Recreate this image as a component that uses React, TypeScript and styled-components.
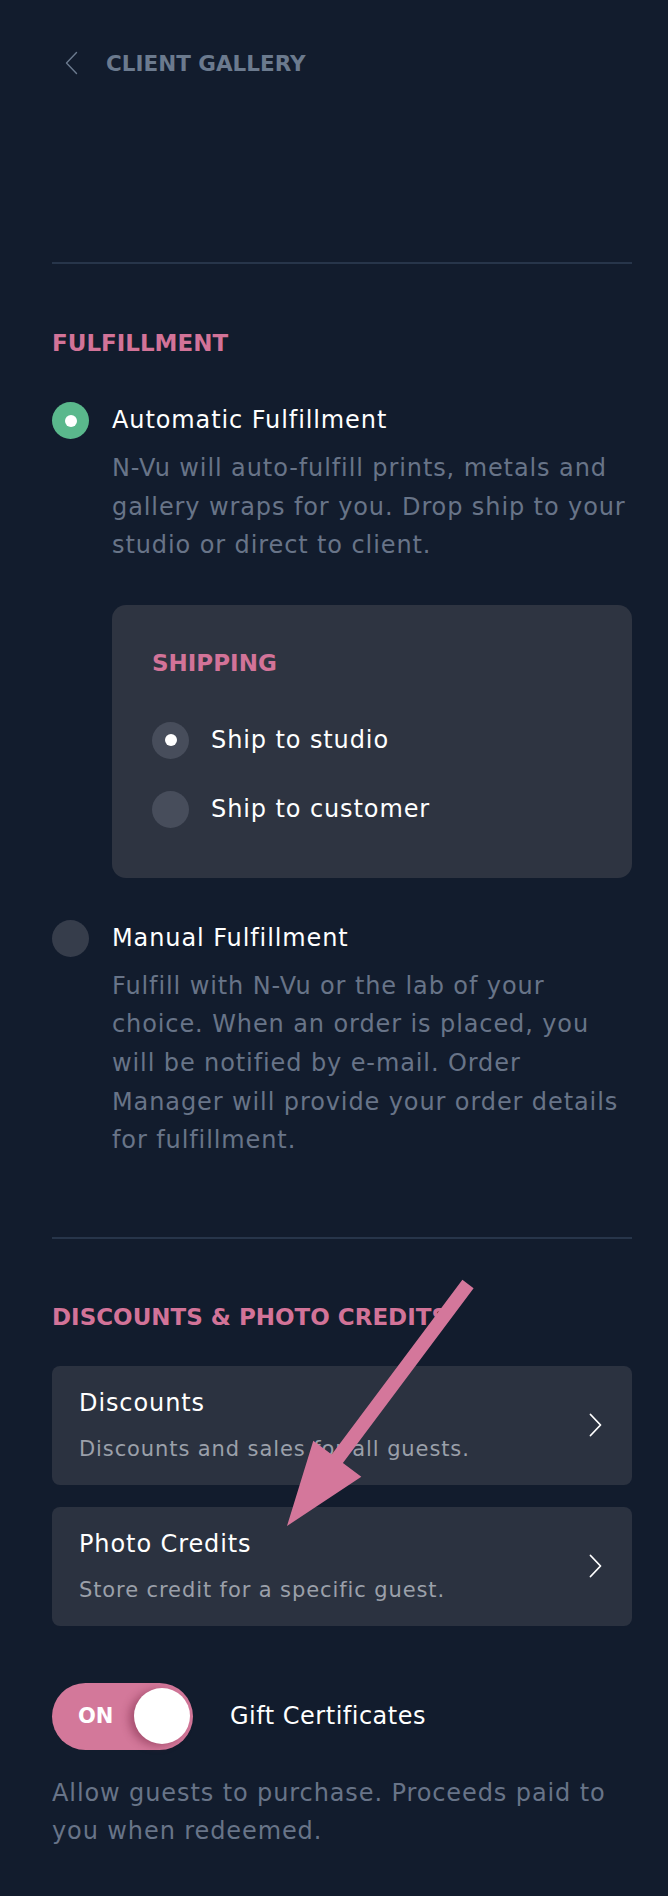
import React from 'react';
import styled, { createGlobalStyle } from 'styled-components';

const GlobalStyle = createGlobalStyle`
  html, body {
    margin: 0;
    padding: 0;
    background: #121c2d;
  }
  body {
    font-family: "DejaVu Sans", "Noto Sans", sans-serif;
    -webkit-font-smoothing: antialiased;
  }
  * {
    box-sizing: border-box;
  }
`;

const Page = styled.div`
  position: relative;
  width: 668px;
  min-height: 1896px;
  padding: 0 36px 0 52px;
  background: #121c2d;
  overflow: hidden;
`;

const TopBar = styled.div`
  display: flex;
  align-items: center;
  gap: 28px;
  height: 126px;
  padding-left: 13px;
`;

const BackTitle = styled.span`
  font-size: 21.5px;
  font-weight: 700;
  color: #6b7a8e;
`;

const Divider = styled.hr<{ $top: number }>`
  margin: ${(p) => p.$top}px 0 0;
  border: none;
  height: 2px;
  background: #27354a;
`;

const SectionTitle = styled.h2<{ $top: number }>`
  margin: ${(p) => p.$top}px 0 0;
  font-size: 23px;
  line-height: 30px;
  font-weight: 700;
  color: #d27398;
`;

const Option = styled.div<{ $top: number }>`
  display: grid;
  grid-template-columns: 37px 1fr;
  column-gap: 23px;
  margin-top: ${(p) => p.$top}px;
`;

const Radio = styled.span<{ $tone: 'green' | 'muted' | 'card'; $checked?: boolean }>`
  flex: none;
  width: 37px;
  height: 37px;
  border-radius: 50%;
  display: flex;
  align-items: center;
  justify-content: center;
  background: ${(p) =>
    p.$tone === 'green' ? '#5ab88c' : p.$tone === 'card' ? '#474d5b' : '#363d4b'};
  &::after {
    content: '';
    display: ${(p) => (p.$checked ? 'block' : 'none')};
    width: 12px;
    height: 12px;
    border-radius: 50%;
    background: #fff;
  }
`;

const OptionTitle = styled.div`
  font-size: 24px;
  line-height: 37px;
  letter-spacing: 0.9px;
  color: #ffffff;
`;

const Description = styled.p<{ $top: number }>`
  grid-column: 2;
  margin: ${(p) => p.$top}px 0 0;
  font-size: 24px;
  line-height: 38.6px;
  letter-spacing: 0.9px;
  color: #687488;
`;

const ShippingCard = styled.div`
  grid-column: 2;
  margin-top: 40px;
  padding: 43px 40px 50px;
  border-radius: 14px;
  background: #2e3441;
`;

const CardTitle = styled.h3`
  margin: 0;
  font-size: 23px;
  line-height: 30px;
  font-weight: 700;
  color: #d27398;
`;

const ShipList = styled.div`
  display: flex;
  flex-direction: column;
  gap: 32px;
  margin-top: 44px;
`;

const ShipRow = styled.div`
  display: flex;
  align-items: center;
  gap: 22px;
  font-size: 24px;
  line-height: 37px;
  letter-spacing: 0.9px;
  color: #ffffff;
`;

const LinkCard = styled.div<{ $top: number }>`
  display: flex;
  align-items: center;
  justify-content: space-between;
  height: 119px;
  margin-top: ${(p) => p.$top}px;
  padding: 0 30px 0 27px;
  border-radius: 8px;
  background: #2b3240;
`;

const LinkText = styled.div`
  display: flex;
  flex-direction: column;
  gap: 16px;
  margin-top: 2px;
`;

const LinkTitle = styled.span`
  font-size: 24px;
  line-height: 30px;
  letter-spacing: 0.9px;
  color: #ffffff;
`;

const LinkSub = styled.span`
  font-size: 21px;
  line-height: 30px;
  letter-spacing: 0.9px;
  color: #9ba0aa;
`;

const ToggleRow = styled.div`
  display: flex;
  align-items: center;
  gap: 37px;
  margin-top: 57px;
`;

const Toggle = styled.div`
  display: flex;
  align-items: center;
  justify-content: space-between;
  width: 141px;
  height: 67px;
  padding: 0 3px 0 26px;
  border-radius: 34px;
  background: #d3789a;
`;

const ToggleLabel = styled.span`
  font-size: 21px;
  font-weight: 700;
  color: #ffffff;
`;

const Knob = styled.span`
  width: 56px;
  height: 56px;
  border-radius: 50%;
  background: #ffffff;
  box-shadow: -5px 2px 9px rgba(110, 30, 60, 0.45);
`;

const ToggleText = styled.span`
  font-size: 24px;
  letter-spacing: 0.5px;
  color: #ffffff;
`;

const FootNote = styled.p`
  margin: 24px 0 0;
  font-size: 24px;
  line-height: 38.6px;
  letter-spacing: 0.9px;
  color: #687488;
`;

const ArrowLayer = styled.svg`
  position: absolute;
  left: 0;
  top: 0;
  pointer-events: none;
`;

const Chevron = ({ dir, color, width = 1.6 }: { dir: 'left' | 'right'; color: string; width?: number }) => (
  <svg width="13" height="24" viewBox="0 0 13 24" fill="none">
    <path
      d={dir === 'left' ? 'M11.5 1.5 L1.5 12 L11.5 22.5' : 'M1.5 1.5 L11.5 12 L1.5 22.5'}
      stroke={color}
      strokeWidth={width}
      strokeLinecap="round"
      strokeLinejoin="round"
    />
  </svg>
);

// annotation arrow drawn over the discount cards
const arrowPoints = (() => {
  const tail = [468, 1284];
  const tip = [287, 1526];
  const dx = tip[0] - tail[0];
  const dy = tip[1] - tail[1];
  const len = Math.hypot(dx, dy);
  const u = [dx / len, dy / len];
  const n = [-u[1], u[0]];
  const headLen = 84;
  const headHalf = 30;
  const shaftHalf = 7;
  const back = [tip[0] - u[0] * headLen, tip[1] - u[1] * headLen];
  const pt = (base: number[], s: number) => `${base[0] + n[0] * s},${base[1] + n[1] * s}`;
  return [
    pt(tail, shaftHalf),
    pt(back, shaftHalf),
    pt(back, headHalf),
    `${tip[0]},${tip[1]}`,
    pt(back, -headHalf),
    pt(back, -shaftHalf),
    pt(tail, -shaftHalf),
  ].join(' ');
})();

const App = () => (
  <>
    <GlobalStyle />
    <Page>
      <TopBar>
        <Chevron dir="left" color="#6b7a8e" width={1.4} />
        <BackTitle>CLIENT GALLERY</BackTitle>
      </TopBar>

      <Divider $top={136} />

      <SectionTitle $top={64}>FULFILLMENT</SectionTitle>

      <Option $top={44}>
        <Radio $tone="green" $checked />
        <OptionTitle>Automatic Fulfillment</OptionTitle>
        <Description $top={10}>
          N-Vu will auto-fulfill prints, metals and gallery wraps for you. Drop ship to your studio or
          direct to client.
        </Description>
        <ShippingCard>
          <CardTitle>SHIPPING</CardTitle>
          <ShipList>
            <ShipRow>
              <Radio $tone="card" $checked />
              Ship to studio
            </ShipRow>
            <ShipRow>
              <Radio $tone="card" />
              Ship to customer
            </ShipRow>
          </ShipList>
        </ShippingCard>
      </Option>

      <Option $top={42}>
        <Radio $tone="muted" />
        <OptionTitle>Manual Fulfillment</OptionTitle>
        <Description $top={10}>
          Fulfill with N-Vu or the lab of your choice. When an order is placed, you will be notified by
          e-mail. Order Manager will provide your order details for fulfillment.
        </Description>
      </Option>

      <Divider $top={77} />

      <SectionTitle $top={63}>DISCOUNTS &amp; PHOTO CREDITS</SectionTitle>

      <LinkCard $top={34}>
        <LinkText>
          <LinkTitle>Discounts</LinkTitle>
          <LinkSub>Discounts and sales for all guests.</LinkSub>
        </LinkText>
        <Chevron dir="right" color="#ffffff" width={1.8} />
      </LinkCard>

      <LinkCard $top={22}>
        <LinkText>
          <LinkTitle>Photo Credits</LinkTitle>
          <LinkSub>Store credit for a specific guest.</LinkSub>
        </LinkText>
        <Chevron dir="right" color="#ffffff" width={1.8} />
      </LinkCard>

      <ToggleRow>
        <Toggle>
          <ToggleLabel>ON</ToggleLabel>
          <Knob />
        </Toggle>
        <ToggleText>Gift Certificates</ToggleText>
      </ToggleRow>

      <FootNote>Allow guests to purchase. Proceeds paid to you when redeemed.</FootNote>

      <ArrowLayer width="668" height="1896" viewBox="0 0 668 1896">
        <polygon points={arrowPoints} fill="#d4779b" />
      </ArrowLayer>
    </Page>
  </>
);

export default App;
